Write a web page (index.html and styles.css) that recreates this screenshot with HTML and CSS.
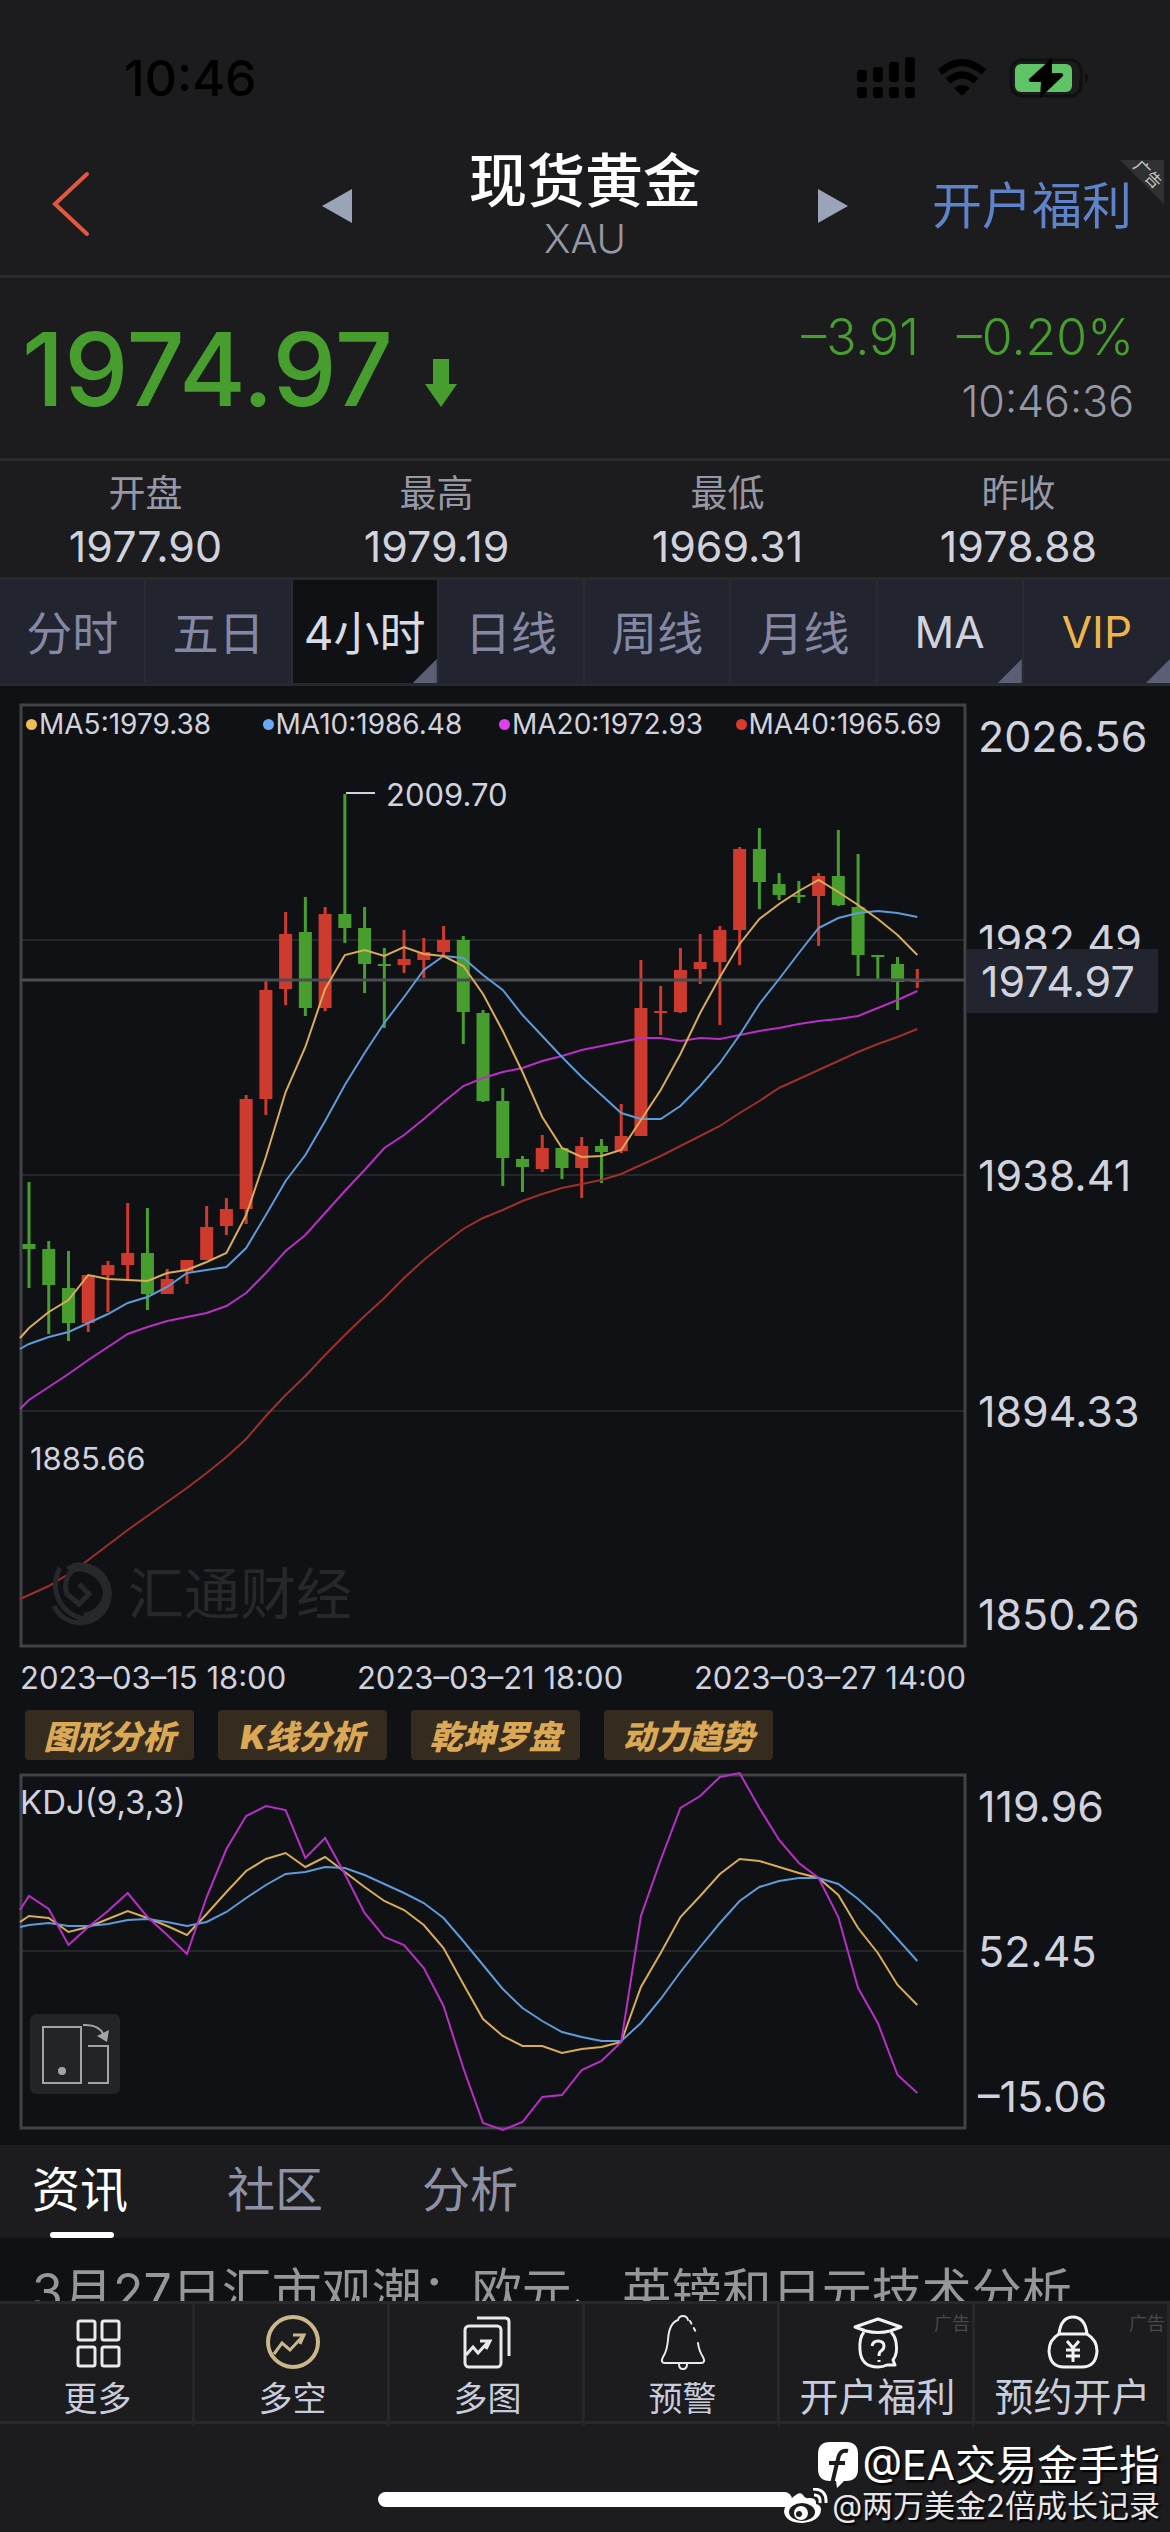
FILE: index.html
```html
<!DOCTYPE html>
<html lang="zh-CN">
<head>
    <meta charset="UTF-8">
    <meta name="viewport" content="width=device-width, initial-scale=1.0">
    <title>现货黄金 XAU</title>
    <link rel="stylesheet" href="styles.css">
</head>
<body>
    <!-- Status bar -->
    <div class="status-bar">
        <span class="clock">10:46</span>
        <div class="status-icons">
            <svg width="58" height="42" viewBox="0 0 58 42">
                <rect x="0" y="13" width="10" height="12" rx="3"/>
                <rect x="16" y="10" width="10" height="15" rx="3"/>
                <rect x="32" y="5" width="10" height="20" rx="3"/>
                <rect x="48" y="0" width="10" height="25" rx="3"/>
                <rect x="0" y="30" width="10" height="11" rx="3"/>
                <rect x="16" y="30" width="10" height="11" rx="3"/>
                <rect x="32" y="30" width="10" height="11" rx="3"/>
                <rect x="48" y="30" width="10" height="11" rx="3"/>
            </svg>
            <svg width="50" height="38" viewBox="0 0 50 38">
                <path d="M3 13 Q25 -6 47 13" fill="none" stroke="#000" stroke-width="7"/>
                <path d="M11 22 Q25 10 39 22" fill="none" stroke="#000" stroke-width="7"/>
                <path d="M17 29 Q25 23 33 29 L25 37 Z"/>
            </svg>
            <svg width="82" height="42" viewBox="0 0 82 42">
                <rect x="2" y="3" width="70" height="36" rx="11" fill="none" stroke="#101012" stroke-width="3"/>
                <path d="M76 15 q6 6 0 12 z" fill="#101012"/>
                <rect x="6" y="7" width="57" height="28" rx="6" fill="#5ec466"/>
                <path d="M43 1 L20 22 q-1 3 3 3 h9 l-1 16 L54 19 q1 -3 -3 -3 h-8 z"/>
            </svg>
        </div>
    </div>

    <!-- Header -->
    <header class="header">
        <div class="header-left">
            <button class="icon-button" aria-label="返回">
                <svg width="38" height="66" viewBox="0 0 38 66"><path d="M35 3 L3 33 L35 63" fill="none" stroke="#e4573f" stroke-width="4" stroke-linecap="round"/></svg>
            </button>
        </div>
        <div class="header-middle">
            <button class="icon-button" aria-label="上一个">
                <svg width="30" height="34" viewBox="0 0 30 34"><path d="M30 0 V34 L0 17 Z" fill="#9aa3b8"/></svg>
            </button>
            <div class="header-title">
                <h1>现货黄金</h1>
                <span>XAU</span>
            </div>
            <button class="icon-button" aria-label="下一个">
                <svg width="30" height="34" viewBox="0 0 30 34"><path d="M0 0 V34 L30 17 Z" fill="#9aa3b8"/></svg>
            </button>
        </div>
        <div class="header-right">
            <a href="#" class="account-link">开户福利</a>
            <div class="corner"><span>广告</span></div>
        </div>
    </header>

    <!-- Quote -->
    <section class="quote">
        <div class="price">
            <span>1974.97</span>
            <svg width="32" height="48" viewBox="0 0 32 48"><path d="M8 0 H24 V25 H32 L16 48 L0 25 H8 Z" fill="#479e2f"/></svg>
        </div>
        <div class="change">
            <div class="change-values"><span>–3.91</span><span>–0.20%</span></div>
            <div class="change-time">10:46:36</div>
        </div>
    </section>

    <dl class="stats">
        <div><dt>开盘</dt><dd>1977.90</dd></div>
        <div><dt>最高</dt><dd>1979.19</dd></div>
        <div><dt>最低</dt><dd>1969.31</dd></div>
        <div><dt>昨收</dt><dd>1978.88</dd></div>
    </dl>

    <!-- Period tabs -->
    <nav class="periods">
        <button>分时</button>
        <button>五日</button>
        <button class="active more">4小时</button>
        <button>日线</button>
        <button>周线</button>
        <button>月线</button>
        <button class="light more">MA</button>
        <button class="vip more">VIP</button>
    </nav>

    <!-- Charts -->
    <main class="charts">
        <div class="chart-row">
            <div class="plot">
                <svg id="priceChart" class="chart-svg" viewBox="0 0 946 942"></svg>
                <div class="legend">
                    <span><i class="dot gold"></i>MA5:1979.38</span>
                    <span><i class="dot blue"></i>MA10:1986.48</span>
                    <span><i class="dot purple"></i>MA20:1972.93</span>
                    <span><i class="dot red"></i>MA40:1965.69</span>
                </div>
                <div class="watermark">
                    <svg width="68" height="68" viewBox="0 0 68 68" fill="none" stroke="#27282b">
                        <path d="M26 6 A29 29 0 1 1 8 46" stroke-width="5"/>
                        <path d="M22 10 A28 28 0 0 1 61 32 A26 26 0 0 1 38 57" stroke-width="8"/>
                        <path d="M14 8 A34 34 0 0 0 42 59" stroke-width="5"/>
                        <path d="M28 9 A22 22 0 0 0 21 34 L33 44 L43 34 L33 24" stroke-width="5"/>
                    </svg>
                    <span>汇通财经</span>
                </div>
            </div>
            <div class="axis axis-price">
                <span>2026.56</span>
                <span>1982.49</span>
                <span>1938.41</span>
                <span>1894.33</span>
                <span>1850.26</span>
                <b class="price-tag">1974.97</b>
            </div>
        </div>

        <div class="dates">
            <span>2023–03–15 18:00</span>
            <span>2023–03–21 18:00</span>
            <span>2023–03–27 14:00</span>
        </div>

        <div class="tools">
            <button>图形分析</button>
            <button>K线分析</button>
            <button>乾坤罗盘</button>
            <button>动力趋势</button>
        </div>

        <div class="chart-row">
            <div class="plot">
                <svg id="kdjChart" class="chart-svg" viewBox="0 0 946 354"></svg>
                <span class="kdj-label">KDJ(9,3,3)</span>
                <button class="rotate" aria-label="横屏">
                    <svg width="70" height="64" viewBox="0 0 70 64" fill="none" stroke="#a3a4a8" stroke-width="2">
                        <rect x="3" y="5" width="38" height="56"/>
                        <path d="M48 24 H68 V61 H48"/>
                        <path d="M43 3 Q60 2 64 14"/>
                        <path d="M57 14 L69 8 L67 20 Z" fill="#a3a4a8" stroke="none"/>
                        <circle cx="22" cy="49" r="4" fill="#a3a4a8" stroke="none"/>
                    </svg>
                </button>
            </div>
            <div class="axis axis-kdj">
                <span>119.96</span>
                <span>52.45</span>
                <span>–15.06</span>
            </div>
        </div>
    </main>

    <!-- News -->
    <nav class="news-tabs">
        <button class="active">资讯</button>
        <button>社区</button>
        <button>分析</button>
    </nav>
    <div class="news"><a href="#">3月27日汇市观潮：欧元、英镑和日元技术分析</a></div>

    <!-- Bottom bar -->
    <nav class="bottom-bar">
        <a href="#">
            <svg width="56" height="60" viewBox="0 0 56 60" fill="none" stroke="#e9e9ec" stroke-width="3">
                <rect x="8" y="9" width="17" height="19" rx="2"/>
                <rect x="32" y="9" width="17" height="19" rx="2"/>
                <rect x="8" y="35" width="17" height="19" rx="2"/>
                <rect x="32" y="35" width="17" height="19" rx="2"/>
            </svg>
            <span>更多</span>
        </a>
        <a href="#">
            <svg width="56" height="60" viewBox="0 0 56 60" fill="none" stroke="#cbb78c" stroke-width="4">
                <circle cx="28" cy="30" r="25"/>
                <path d="M9 42 L17 31 L25 38 L38 24 M28 23 H39 L35 32" stroke-width="3"/>
            </svg>
            <span>多空</span>
        </a>
        <a href="#">
            <svg width="56" height="60" viewBox="0 0 56 60" fill="none" stroke="#e9e9ec" stroke-width="3">
                <rect x="5" y="14" width="36" height="41" rx="4"/>
                <path d="M17 6 H45 Q49 6 49 10 V44"/>
                <path d="M6 43 L13 35 L18 41 L29 29 M20 29 H30 L26 37"/>
            </svg>
            <span>多图</span>
        </a>
        <a href="#">
            <svg width="56" height="60" viewBox="0 0 56 60" fill="none" stroke="#e9e9ec" stroke-width="2" stroke-linecap="round">
                <path d="M33 8 Q32 4 28 4 Q24 4 23 8 Q14 11 13 28 Q12 39 8 45 Q5 51 10 51 H46 Q51 51 48 45 Q44 39 43 31"/>
                <path d="M35 9 L42 22" stroke-dasharray="3 5"/>
                <path d="M24 52 Q24 57 28 57 Q32 57 32 52"/>
            </svg>
            <span>预警</span>
        </a>
        <a href="#" class="promo">
            <em>广告</em>
            <svg width="56" height="60" viewBox="0 0 56 60" fill="none" stroke="#f2f2f4" stroke-width="3" stroke-linejoin="round">
                <path d="M28 7 L51 15 L40 19 Q28 22 16 19 L5 15 Z"/>
                <path d="M14 20 Q9 26 10 38 Q11 55 28 55 Q33 55 37 53 H45 L43 48 Q48 42 46 30 Q45 24 41 20"/>
                <path d="M22 34 Q23 29 28 29 Q34 29 34 34 Q34 37 31 39 Q29 40 29 44 M29 48 V50"/>
            </svg>
            <span>开户福利</span>
        </a>
        <a href="#" class="promo">
            <em>广告</em>
            <svg width="56" height="60" viewBox="0 0 56 60" fill="none" stroke="#f2f2f4" stroke-width="3" stroke-linejoin="round">
                <path d="M14 22 Q16 5 28 5 Q40 5 42 22 Z"/>
                <path d="M14 22 Q4 28 4 39 Q5 55 19 55 H37 Q51 55 52 39 Q52 28 42 22"/>
                <path d="M22 29 L28 36 L34 29 M28 36 V50 M21 38 H35 M21 44 H35"/>
            </svg>
            <span>预约开户</span>
        </a>
    </nav>

    <footer class="home-area">
        <div class="home-indicator"></div>
        <div class="credits">
            <div class="credit-main">
                <svg width="40" height="46" viewBox="0 0 40 46">
                    <path d="M12 0 H28 Q40 0 40 12 V27 Q40 39 28 39 H26 L19 46 L18 39 H12 Q0 39 0 27 V12 Q0 0 12 0 Z" fill="#fff"/>
                    <path d="M30 9 Q22 7 20 17 L14 42 M11 21 H27" fill="none" stroke="#1c1c1e" stroke-width="4"/>
                </svg>
                <span>@EA交易金手指</span>
            </div>
            <div class="credit-sub">
                <svg width="44" height="36" viewBox="0 0 44 36">
                    <path d="M19 7 Q16 2 7 11 Q0 18 0 24 Q2 35 19 35 Q36 33 37 22 Q37 17 32 16 Q33 9 24 10 Q21 11 19 7 Z" fill="#fff"/>
                    <ellipse cx="18" cy="24" rx="13" ry="9" fill="#1c1c1e"/>
                    <circle cx="17" cy="25" r="7" fill="#fff"/>
                    <circle cx="15" cy="26" r="3" fill="#1c1c1e"/>
                    <path d="M30 7 Q37 7 36 15 M29 1 Q43 1 42 15" fill="none" stroke="#fff" stroke-width="3"/>
                </svg>
                <span>@两万美金2倍成长记录</span>
            </div>
        </div>
    </footer>

    <script src="chart.js"></script>
</body>
</html>
```
FILE: styles.css
```css
* {
    box-sizing: border-box;
    font-family: 'Inter', 'Noto Sans CJK SC', sans-serif;
}

body {
    margin: 0;
    background-color: #1c1c1e;
    color: #d0d2de;
}

button {
    padding: 0;
    border: none;
    background: none;
    color: inherit;
}

a {
    color: inherit;
    text-decoration: none;
}

svg {
    display: block;
    flex-shrink: 0;
}

/* Status bar */
.status-bar {
    display: flex;
    justify-content: space-between;
    align-items: center;
    height: 141px;
    padding: 14px 79px 0 124px;
    color: #000;
}

.clock {
    font-size: 50px;
    font-weight: 500;
}

.status-icons {
    display: flex;
    align-items: center;
    gap: 22px;
}

/* Header */
.header {
    display: grid;
    grid-template-columns: 1fr 45% 1fr;
    align-items: center;
    height: 137px;
    padding-bottom: 4px;
    border-bottom: 3px solid #28292c;
}

.header-left {
    padding-left: 52px;
}

.header-middle {
    display: flex;
    justify-content: space-between;
    align-items: center;
}

.header-title {
    text-align: center;
}

.header-title h1 {
    margin: 0;
    color: #fff;
    font-size: 58px;
    line-height: 66px;
    font-weight: 500;
}

.header-title span {
    display: block;
    color: #9698a6;
    font-size: 40px;
    line-height: 50px;
    font-weight: 300;
}

.header-right {
    position: relative;
    padding-right: 38px;
    text-align: right;
}

.account-link {
    color: #5f83c9;
    font-size: 50px;
    line-height: 72px;
}

.corner {
    position: absolute;
    top: -10px;
    right: 6px;
    width: 44px;
    height: 44px;
    background-color: #303133;
    clip-path: polygon(0 0, 100% 0, 100% 100%);
}

.corner span {
    position: absolute;
    top: 4px;
    right: 0;
    color: #c8c8c8;
    font-size: 16px;
    line-height: 20px;
    transform: rotate(45deg);
}

/* Quote */
.quote {
    display: flex;
    justify-content: space-between;
    align-items: center;
    height: 183px;
    padding: 2px 36px 0 22px;
    border-bottom: 3px solid #28292c;
}

.price {
    display: flex;
    align-items: flex-end;
    gap: 32px;
    color: #479e2f;
    font-size: 102px;
    line-height: 100px;
    font-weight: 500;
}

.price svg {
    margin-bottom: 12px;
}

.change {
    text-align: right;
}

.change-values {
    display: flex;
    gap: 38px;
    color: #479e2f;
    font-size: 50px;
    line-height: 64px;
    font-weight: 300;
}

.change-time {
    color: #9698a6;
    font-size: 43px;
    line-height: 64px;
    font-weight: 300;
}

.stats {
    display: grid;
    grid-template-columns: repeat(4, 1fr);
    align-items: center;
    height: 119px;
    margin: 0;
    padding: 4px 6px 0 0;
    border-bottom: 3px solid #28292c;
    text-align: center;
}

.stats dt {
    color: #9698a6;
    font-size: 37px;
    line-height: 50px;
}

.stats dd {
    margin: 0;
    font-size: 43px;
    line-height: 54px;
}

/* Period tabs */
.periods {
    display: grid;
    grid-template-columns: repeat(8, 1fr);
    height: 106px;
    background-color: #222430;
    border-bottom: 3px solid #28292c;
}

.periods button {
    position: relative;
    padding-bottom: 4px;
    border-right: 2px solid #282a34;
    color: #8588a3;
    font-size: 46px;
}

.periods .active {
    background-color: #101114;
    color: #d8dae4;
}

.periods .light {
    color: #d0d2de;
}

.periods .vip {
    border-right: none;
    color: #edb64c;
}

.periods .light,
.periods .vip {
    padding-bottom: 0;
    font-size: 44px;
}

.periods .more::after {
    content: "";
    position: absolute;
    right: 0;
    bottom: 0;
    width: 24px;
    height: 24px;
    background-color: #5b5f76;
    clip-path: polygon(100% 0, 100% 100%, 0 100%);
}

/* Charts */
.charts {
    padding: 18px 0 17px 20px;
    background-color: #101114;
}

.chart-row {
    display: grid;
    grid-template-columns: 1fr 204px;
}

.plot {
    position: relative;
}

.chart-svg {
    width: 100%;
    height: auto;
    overflow: visible;
}

.frame {
    fill: none;
    stroke: #424346;
    stroke-width: 3;
}

.grid-line {
    stroke: #25262a;
    stroke-width: 2;
}

.now-line {
    stroke: #4b4c50;
    stroke-width: 3;
}

.up {
    fill: #cf3a2f;
}

.down {
    fill: #479e2f;
}

.line {
    fill: none;
    stroke-width: 2;
}

.line-gold {
    stroke: #d8ac58;
}

.line-blue {
    stroke: #5f9bd8;
}

.line-purple {
    stroke: #b82fc6;
}

.line-red {
    stroke: #9c302c;
}

.mark-line {
    stroke: #d0d2de;
    stroke-width: 2;
}

.mark {
    fill: #d0d2de;
    font-size: 31px;
}

.legend {
    position: absolute;
    top: 4px;
    left: 6px;
    display: grid;
    grid-template-columns: repeat(4, 1fr);
    width: 100%;
    font-size: 28px;
    line-height: 32px;
}

.legend span {
    display: flex;
    align-items: center;
    gap: 2px;
}

.dot {
    width: 11px;
    height: 11px;
    border-radius: 50%;
}

.gold {
    background-color: #f0b95a;
}

.blue {
    background-color: #6aa9f5;
}

.purple {
    background-color: #e23df0;
}

.red {
    background-color: #d93a30;
}

.watermark {
    position: absolute;
    bottom: 16px;
    left: 26px;
    display: flex;
    align-items: center;
    gap: 14px;
    color: #27282b;
    font-size: 56px;
    line-height: 72px;
}

.axis {
    position: relative;
    display: grid;
    align-items: center;
    padding-left: 12px;
    font-size: 43px;
    line-height: 64px;
}

.axis span:first-child {
    align-self: start;
}

.axis span:nth-last-of-type(1) {
    align-self: end;
}

.axis-price {
    grid-template-rows: 1fr 2fr 2fr 2fr 1fr;
}

.axis-kdj {
    grid-template-rows: 1fr 2fr 1fr;
}

.price-tag {
    position: absolute;
    top: 26%;
    left: 1px;
    right: 12px;
    padding-left: 14px;
    background-color: #222430;
    font-weight: 400;
}

.dates {
    display: flex;
    justify-content: space-between;
    margin-right: 204px;
    font-size: 31px;
    line-height: 64px;
}

.tools {
    display: flex;
    gap: 24px;
    padding: 0 5px 14px;
}

.tools button {
    width: 169px;
    height: 50px;
    border-radius: 4px;
    background-color: #352c1f;
    color: #dba956;
    font-size: 33px;
    font-weight: 900;
    font-style: italic;
}

.kdj-label {
    position: absolute;
    top: 8px;
    left: 0;
    font-size: 33px;
    line-height: 40px;
}

.rotate {
    position: absolute;
    bottom: 34px;
    left: 10px;
    display: flex;
    justify-content: center;
    align-items: center;
    width: 90px;
    height: 80px;
    border-radius: 6px;
    background-color: #232427;
}

/* News */
.news-tabs {
    display: flex;
    gap: 99px;
    height: 93px;
    padding-left: 32px;
}

.news-tabs button {
    position: relative;
    padding-bottom: 12px;
    color: #8f92a5;
    font-size: 48px;
}

.news-tabs .active {
    color: #fff;
}

.news-tabs .active::after {
    content: "";
    position: absolute;
    bottom: 0;
    left: 18px;
    right: 14px;
    height: 6px;
    border-radius: 3px;
    background-color: #fff;
}

.news {
    height: 63px;
    padding: 18px 32px 0;
    overflow: hidden;
    background-color: #101114;
    color: #96979b;
    font-size: 50px;
    line-height: 72px;
    white-space: nowrap;
}

/* Bottom bar */
.bottom-bar {
    display: grid;
    grid-template-columns: repeat(6, 1fr);
    height: 123px;
    border-top: 3px solid #28292c;
    border-bottom: 3px solid #28292c;
}

.bottom-bar a {
    position: relative;
    display: flex;
    flex-direction: column;
    align-items: center;
    padding: 8px 0 0 3px;
    border-right: 3px solid #26272a;
    color: #c8ccdc;
    font-size: 34px;
    line-height: 54px;
}

.bottom-bar .promo {
    font-size: 39px;
    line-height: 50px;
}

.bottom-bar em {
    position: absolute;
    top: 8px;
    right: 2px;
    color: #47484b;
    font-size: 18px;
    line-height: 24px;
    font-style: normal;
}

/* Home area */
.home-area {
    position: relative;
    height: 108px;
    padding-top: 68px;
}

.home-indicator {
    width: 414px;
    height: 15px;
    margin: 0 auto;
    border-radius: 8px;
    background-color: #fff;
}

.credits {
    position: absolute;
    top: 18px;
    right: 10px;
    color: #fff;
    text-shadow: 2px 2px 2px #000;
}

.credit-main,
.credit-sub {
    display: flex;
    justify-content: flex-end;
    align-items: center;
    gap: 4px;
}

.credit-main {
    font-size: 41px;
    line-height: 46px;
}

.credit-sub {
    color: #e6e6e8;
    font-size: 31px;
    line-height: 32px;
}
```
FILE: chart.js
```js
const SVG_NS = "http://www.w3.org/2000/svg";
const WIDTH = 946;
const FIRST_X = 9;
const STEP = 19.74;

// [high, body top, body bottom, low, direction], in chart units from the top
const candles = [
    [478, 540, 545, 584, "down"], [537, 545, 581, 630, "down"], [547, 584, 619, 637, "down"],
    [571, 571, 619, 628, "up"], [557, 561, 571, 608, "up"], [499, 549, 561, 575, "up"],
    [504, 549, 590, 606, "down"], [565, 575, 590, 590, "up"], [556, 556, 567, 580, "up"],
    [502, 523, 556, 556, "up"], [494, 505, 522, 531, "up"], [391, 395, 505, 520, "up"],
    [277, 286, 395, 411, "up"], [208, 230, 285, 301, "up"], [193, 228, 304, 312, "down"],
    [203, 210, 304, 307, "up"], [90, 210, 224, 239, "down"], [203, 224, 260, 289, "down"],
    [244, 260, 262, 324, "down"], [226, 255, 261, 269, "up"], [234, 248, 256, 274, "up"],
    [222, 236, 248, 253, "up"], [232, 236, 308, 340, "down"], [306, 309, 397, 398, "down"],
    [384, 397, 454, 482, "down"], [452, 455, 463, 488, "down"], [431, 444, 465, 468, "up"],
    [444, 444, 464, 475, "down"], [433, 442, 464, 494, "up"], [435, 442, 448, 479, "down"],
    [400, 432, 447, 449, "up"], [256, 304, 432, 432, "up"], [282, 307, 309, 331, "up"],
    [244, 266, 308, 309, "up"], [230, 258, 265, 280, "up"], [222, 226, 258, 321, "up"],
    [143, 145, 226, 261, "up"], [124, 145, 178, 205, "down"], [169, 180, 191, 196, "down"],
    [177, 191, 193, 199, "down"], [169, 172, 192, 242, "up"], [126, 172, 201, 202, "down"],
    [150, 203, 251, 272, "down"], [251, 251, 253, 275, "down"], [253, 260, 278, 306, "down"],
    [265, 276, 278, 284, "up"]
];

// The first value of each line is its height at the left edge of the frame
const ma5 = [634, 624, 608, 596, 571, 575, 576, 577, 569, 566, 558, 549, 511, 453, 388, 343, 285, 251, 246, 252, 243, 250, 252, 262, 290, 327, 368, 413, 444, 453, 452, 446, 416, 386, 350, 309, 273, 240, 215, 200, 187, 176, 188, 201, 215, 231, 251];
const ma10 = [645, 640, 633, 628, 619, 610, 599, 593, 583, 569, 566, 563, 544, 511, 477, 451, 417, 381, 349, 319, 293, 266, 252, 254, 271, 286, 311, 332, 353, 373, 391, 409, 415, 415, 402, 382, 359, 331, 300, 275, 249, 224, 214, 209, 207, 209, 213];
const ma20 = [705, 696, 683, 670, 656, 643, 630, 623, 617, 613, 609, 602, 589, 569, 547, 531, 509, 487, 466, 444, 431, 415, 398, 382, 374, 368, 364, 357, 352, 346, 342, 338, 334, 334, 337, 334, 335, 331, 327, 324, 320, 317, 315, 312, 304, 296, 287];
const ma40 = [895, 891, 882, 870, 856, 841, 826, 812, 798, 784, 769, 753, 735, 712, 691, 672, 651, 631, 612, 594, 574, 556, 540, 525, 514, 506, 497, 490, 484, 480, 476, 470, 461, 452, 442, 432, 422, 409, 397, 384, 375, 366, 357, 348, 340, 333, 325];

const kdjJ = [136, 122, 135, 171, 153, 137, 119, 143, 161, 180, 123, 75, 42, 32, 36, 84, 64, 100, 139, 163, 171, 194, 232, 294, 349, 356, 348, 323, 321, 296, 287, 268, 142, 86, 34, 22, 3, -1, 34, 66, 89, 104, 143, 214, 249, 301, 319];
const kdjK = [148, 142, 144, 158, 153, 145, 137, 144, 152, 161, 140, 118, 97, 85, 79, 93, 83, 98, 113, 127, 136, 151, 174, 210, 245, 262, 272, 272, 279, 275, 273, 268, 213, 179, 143, 122, 100, 85, 87, 93, 99, 104, 121, 154, 179, 211, 231];
const kdjD = [153, 151, 149, 152, 152, 150, 146, 145, 148, 152, 148, 138, 124, 111, 100, 98, 93, 94, 101, 110, 119, 129, 144, 167, 191, 215, 234, 247, 258, 263, 267, 267, 249, 225, 198, 173, 149, 127, 113, 107, 104, 104, 110, 125, 143, 165, 187];

function add(svg, tag, className, attrs, text) {
    const el = document.createElementNS(SVG_NS, tag);
    el.setAttribute("class", className);
    for (const name in attrs) {
        el.setAttribute(name, attrs[name]);
    }
    if (text) {
        el.textContent = text;
    }
    svg.appendChild(el);
}

function drawHorizontal(svg, className, y) {
    add(svg, "line", className, { x1: 0, x2: WIDTH, y1: y, y2: y });
}

function drawLine(svg, className, values) {
    const points = values.map((y, i) => (i === 0 ? 0 : FIRST_X + STEP * (i - 1)) + "," + y);
    add(svg, "polyline", "line " + className, { points: points.join(" ") });
}

// Price chart
const price = document.getElementById("priceChart");
[236, 471, 707].forEach(y => drawHorizontal(price, "grid-line", y));
add(price, "rect", "frame", { x: 1, y: 1, width: WIDTH - 2, height: 941 });
candles.forEach(([high, top, bottom, low, direction], i) => {
    const x = FIRST_X + STEP * i;
    add(price, "rect", direction, { x: x - 1.5, y: high, width: 3, height: low - high });
    add(price, "rect", direction, { x: x - 6.5, y: top, width: 13, height: bottom - top });
});
drawHorizontal(price, "now-line", 276);
drawLine(price, "line-red", ma40);
drawLine(price, "line-purple", ma20);
drawLine(price, "line-blue", ma10);
drawLine(price, "line-gold", ma5);
add(price, "line", "mark-line", { x1: 326, x2: 355, y1: 89, y2: 89 });
add(price, "text", "mark", { x: 366, y: 102 }, "2009.70");
add(price, "text", "mark", { x: 10, y: 766 }, "1885.66");

// KDJ chart
const kdj = document.getElementById("kdjChart");
drawHorizontal(kdj, "grid-line", 177);
add(kdj, "rect", "frame", { x: 1, y: 1, width: WIDTH - 2, height: 353 });
drawLine(kdj, "line-gold", kdjK);
drawLine(kdj, "line-blue", kdjD);
drawLine(kdj, "line-purple", kdjJ);
```
